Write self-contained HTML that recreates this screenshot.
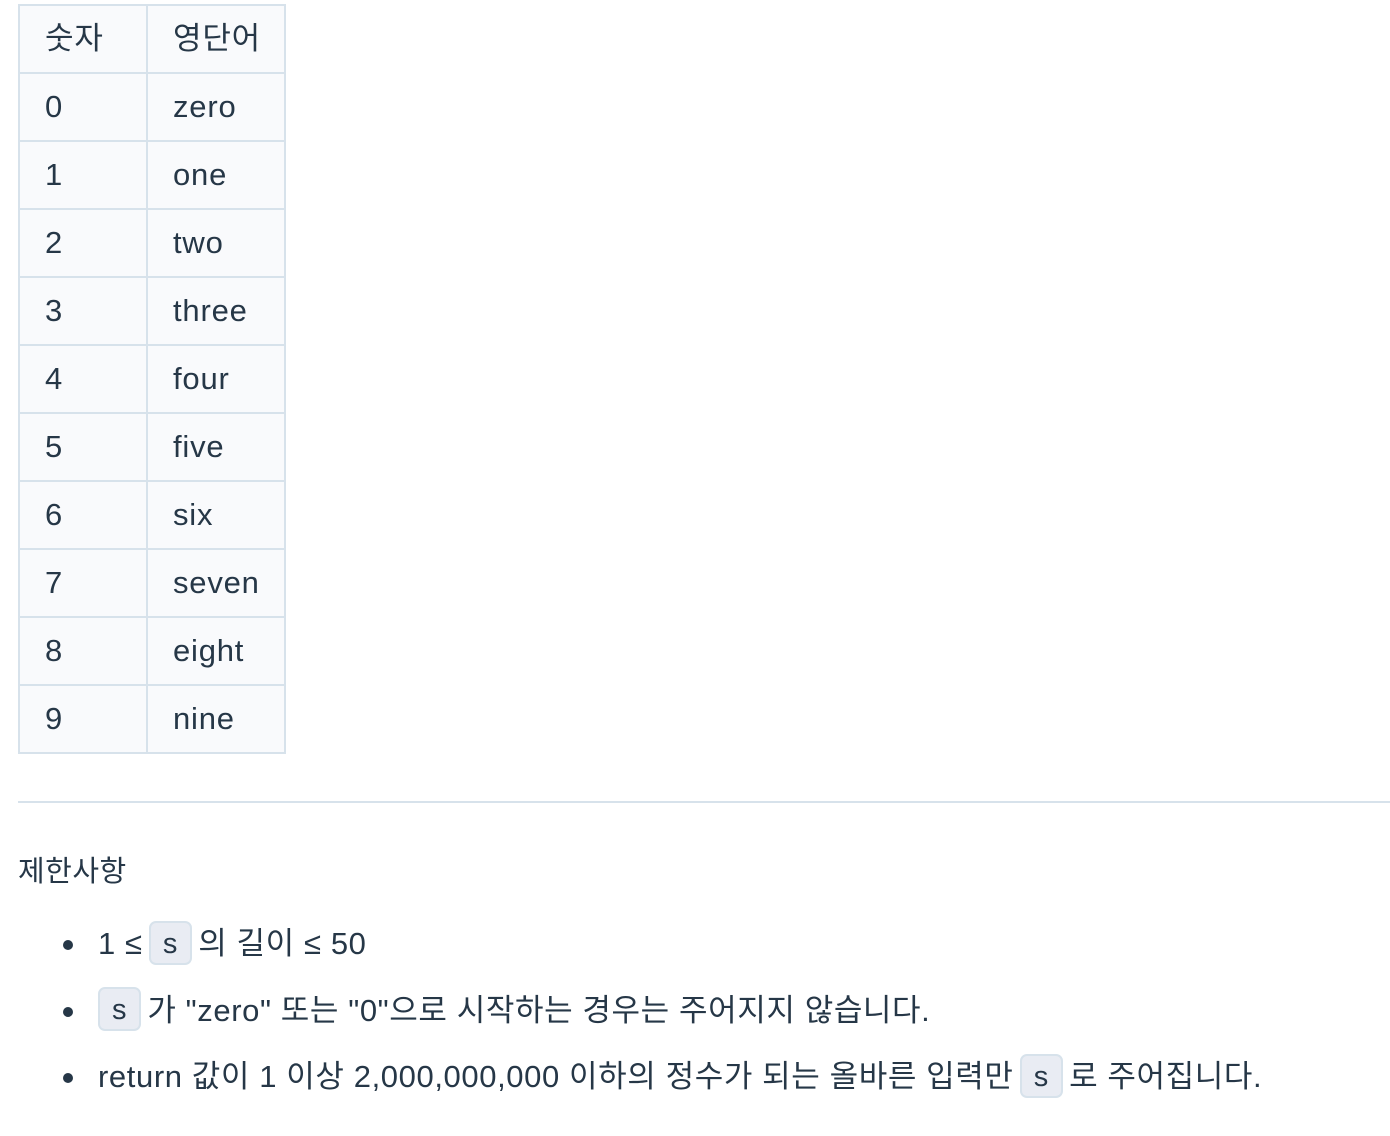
<!DOCTYPE html>
<html><head><meta charset="utf-8"><style>
body{margin:0;background:#fff;color:#263747;font-family:"Liberation Sans","Noto Sans CJK KR",sans-serif;}
table{position:absolute;left:18px;top:4px;border-collapse:collapse;font-size:31px;letter-spacing:0.8px;}
td{border:2px solid #d7e2eb;background:#f9fafc;height:66px;padding:0 0 0 25px;vertical-align:middle;line-height:66px;}
td.a{width:101px}td.b{width:111px}
hr{position:absolute;left:18px;top:801px;width:1372px;margin:0;border:0;border-top:2px solid #d7e2eb;}
.h{position:absolute;left:18px;top:852px;font-size:29px;line-height:40px;letter-spacing:0.5px}
ul{position:absolute;left:0;top:920px;margin:0;padding-left:98px;font-size:31px;list-style:none;letter-spacing:0.6px}
li{height:66.5px;line-height:48px;position:relative}
li::before{content:"";position:absolute;left:-35px;top:20px;width:10px;height:10px;border-radius:50%;background:#263747}
code{font-family:"Liberation Sans",sans-serif;background:#e9ecf3;border:2px solid #d7e2eb;border-radius:7px;padding:2px 12px 0;font-size:29px;display:inline-block;line-height:38px;vertical-align:middle;margin:-6px -3px 0 -3px}
</style></head><body>
<table>
<tr><td class="a">숫자</td><td class="b">영단어</td></tr>
<tr><td class="a">0</td><td class="b">zero</td></tr>
<tr><td class="a">1</td><td class="b">one</td></tr>
<tr><td class="a">2</td><td class="b">two</td></tr>
<tr><td class="a">3</td><td class="b">three</td></tr>
<tr><td class="a">4</td><td class="b">four</td></tr>
<tr><td class="a">5</td><td class="b">five</td></tr>
<tr><td class="a">6</td><td class="b">six</td></tr>
<tr><td class="a">7</td><td class="b">seven</td></tr>
<tr><td class="a">8</td><td class="b">eight</td></tr>
<tr><td class="a">9</td><td class="b">nine</td></tr>
</table>
<hr>
<div class="h">제한사항</div>
<ul>
<li>1 ≤ <code>s</code> 의 길이 ≤ 50</li>
<li><code style="margin-left:0">s</code> 가 "zero" 또는 "0"으로 시작하는 경우는 주어지지 않습니다.</li>
<li>return 값이 1 이상 2,000,000,000 이하의 정수가 되는 올바른 입력만 <code>s</code> 로 주어집니다.</li>
</ul>
</body></html>
